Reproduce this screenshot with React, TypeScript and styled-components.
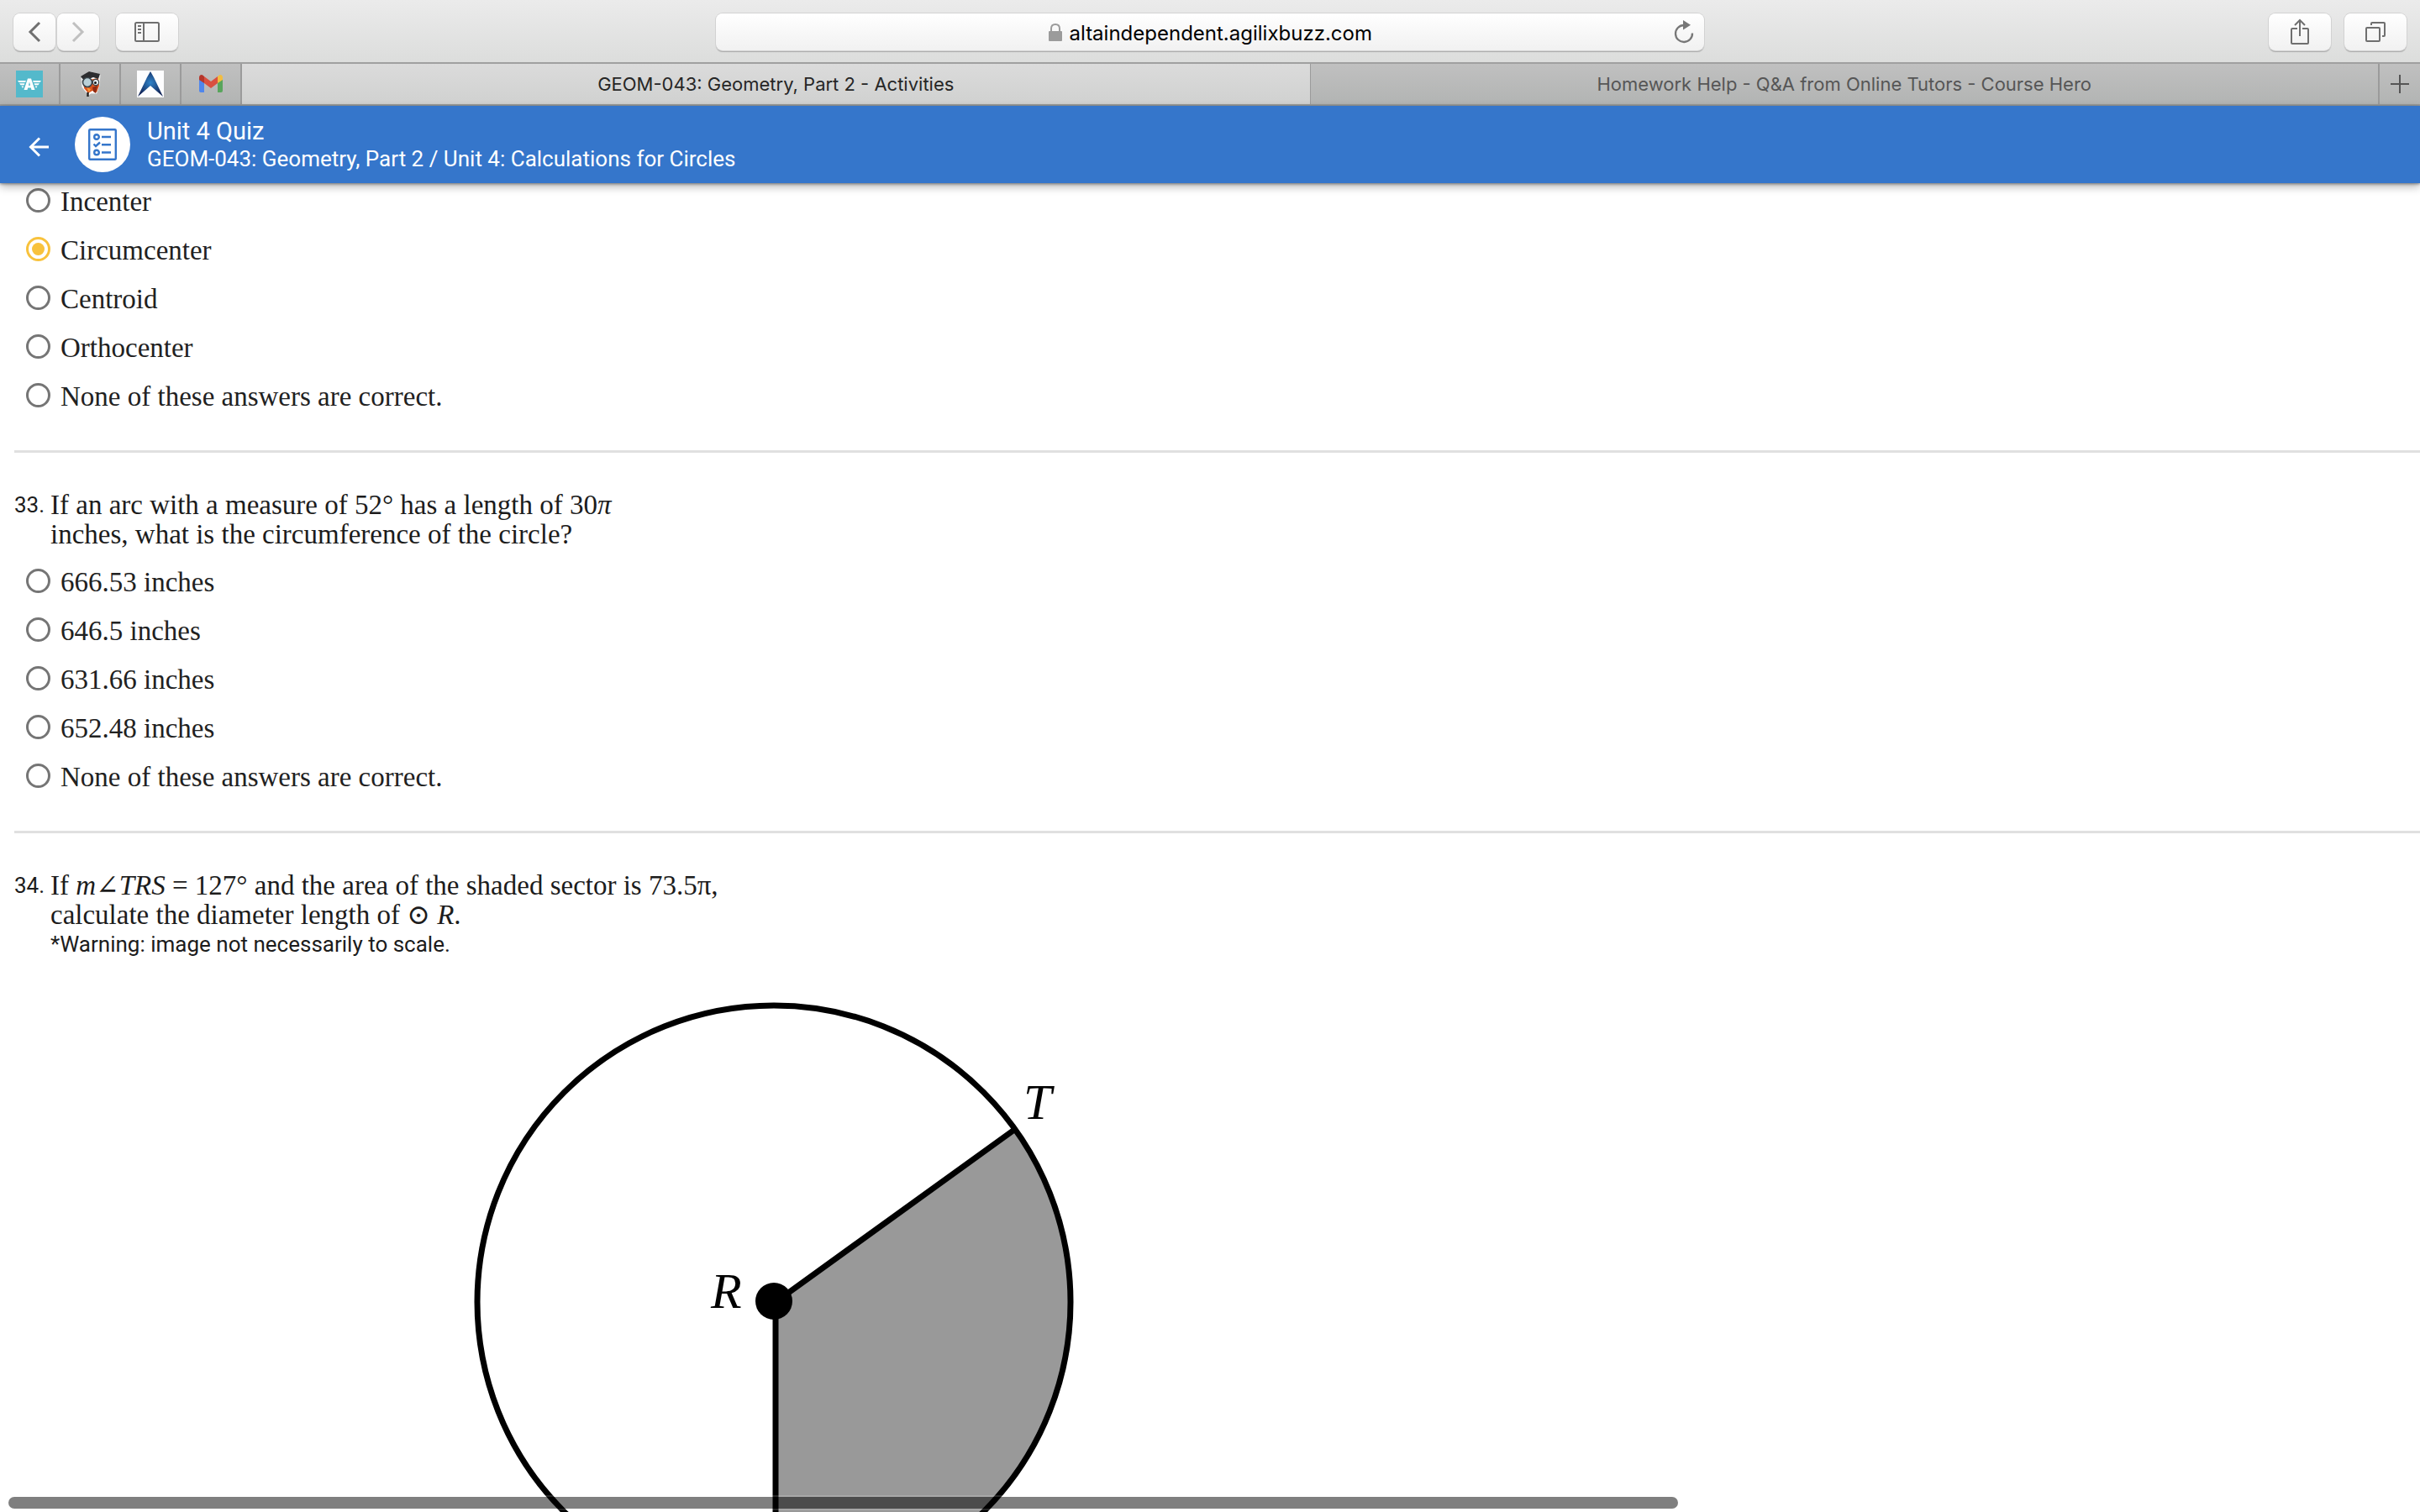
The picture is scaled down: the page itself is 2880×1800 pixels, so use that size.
import React from "react";
import styled, { createGlobalStyle } from "styled-components";

const UI = `Inter, "Liberation Sans", sans-serif`;
const APP = `Roboto, "Liberation Sans", sans-serif`;
const MATH = `"Liberation Serif", "DejaVu Serif", serif`;

const GlobalStyle = createGlobalStyle`
  * { box-sizing: border-box; }
  body { margin: 0; background: #fff; }
  button, input { font: inherit; }
`;

const Window = styled.div`
  position: relative;
  display: flex;
  flex-direction: column;
  height: 100vh;
  overflow: hidden;
  font-family: ${APP};
  color: #212121;
`;

const Toolbar = styled.div`
  display: flex;
  flex: none;
  align-items: center;
  justify-content: space-between;
  height: 74px;
  padding: 2px 16px 0;
  background: linear-gradient(#ebebeb, #dcdddc);
`;

const ToolGroup = styled.div<{ $gap: number }>`
  display: flex;
  flex: 1;
  gap: ${(p) => p.$gap}px;
  &:last-child { justify-content: flex-end; }
`;

const ToolButton = styled.button<{ $wide?: boolean }>`
  display: flex;
  align-items: center;
  justify-content: center;
  width: ${(p) => (p.$wide ? 74 : 50)}px;
  height: 44px;
  padding: 0;
  color: #6f6f6f;
  background: linear-gradient(#fff, #f1f1f1);
  border: 0;
  border-radius: 8px;
  box-shadow: 0 0 0 1px #d2d2d2, 0 2px 1px #a9a9a9;
  &:disabled { color: #c0c0c0; }
`;

const NavPair = styled.div`
  display: flex;
  gap: 2px;
`;

const AddressBar = styled.div`
  display: grid;
  grid-template-columns: 1fr auto 1fr;
  align-items: center;
  width: 41.3%;
  height: 44px;
  padding: 0 12px;
  background: linear-gradient(#fff, #f1f1f1);
  border-radius: 8px;
  box-shadow: 0 0 0 1px #d2d2d2, 0 2px 1px #a9a9a9;
`;

const Address = styled.label`
  grid-column: 2;
  display: flex;
  align-items: center;
  gap: 9px;
`;

const AddressInput = styled.input`
  width: 360px;
  height: 32px;
  padding: 2px 0 0;
  border: 0;
  outline: 0;
  background: transparent;
  color: #000;
  font-family: ${UI};
  font-size: 24px;
`;

const Reload = styled.button`
  justify-self: end;
  display: flex;
  padding: 0;
  border: 0;
  background: none;
  color: #777;
`;

const TabStrip = styled.nav`
  display: flex;
  flex: none;
  height: 52px;
  border-top: 2px solid #a0a0a0;
  border-bottom: 2px solid #9a9c9b;
  background: linear-gradient(#c0c0c0, #b2b4b3);
`;

const PinnedTab = styled.a`
  display: flex;
  align-items: center;
  justify-content: center;
  width: 72px;
  border-right: 2px solid #9b9b9b;
`;

const Tab = styled.a<{ $active?: boolean }>`
  display: flex;
  flex: 1;
  align-items: center;
  justify-content: center;
  color: ${(p) => (p.$active ? "#262626" : "#565656")};
  background: ${(p) => (p.$active ? "linear-gradient(#dbdbdb, #d0d1d0)" : "none")};
  border-right: ${(p) => (p.$active ? 1 : 2)}px solid #9b9b9b;
  font-family: ${UI};
  font-size: 22px;
  text-decoration: none;
`;

const NewTab = styled.button`
  display: flex;
  align-items: center;
  justify-content: center;
  width: 48px;
  padding: 0;
  border: 0;
  background: none;
  color: #555;
`;

const Header = styled.header`
  position: relative;
  z-index: 1;
  display: flex;
  flex: none;
  align-items: center;
  height: 92px;
  padding: 0 32px;
  color: #fff;
  background: #3576cb;
  box-shadow: 0 1px 3px rgba(0, 0, 0, 0.4), 0 4px 10px rgba(0, 0, 0, 0.3);
`;

const BackButton = styled.button`
  display: flex;
  padding: 6px 0 0;
  border: 0;
  background: none;
  color: #fff;
`;

const Badge = styled.div`
  display: flex;
  align-items: center;
  justify-content: center;
  width: 66px;
  height: 66px;
  margin: 0 20px 0 29px;
  border-radius: 50%;
  background: #fff;
  color: #3576cb;
`;

const Title = styled.h1`
  margin: 0;
  font-size: 29px;
  font-weight: 400;
  line-height: 33px;
`;

const Crumb = styled.p`
  margin: 0;
  font-size: 26px;
  line-height: 32px;
`;

const Quiz = styled.main`
  flex: 1;
  min-height: 0;
  overflow: hidden;
  padding: 2px 0 0 17px;
`;

const Question = styled.section`
  padding-bottom: 44px;
  & + & {
    padding-top: 45px;
    border-top: 3px solid #e0e0e0;
  }
`;

const Stem = styled.div`
  display: grid;
  grid-template-columns: 43px 1fr;
  margin-bottom: 19px;
  font-size: 26px;
  line-height: 35px;
  color: #1c1c1c;
`;

const Prose = styled.div`
  font-family: ${MATH};
  font-size: 33px;
`;

const Options = styled.div`
  display: flex;
  flex-direction: column;
  align-items: flex-start;
  gap: 18px;
  padding-left: 14px;
`;

const Option = styled.label`
  display: flex;
  gap: 12px;
  font-family: ${MATH};
  font-size: 33px;
  line-height: 40px;
`;

const Radio = styled.input`
  appearance: none;
  width: 29px;
  height: 29px;
  margin: 4px 0 0;
  padding: 4px;
  border: 3px solid #757575;
  border-radius: 50%;
  &:checked {
    border-color: #f8c23c;
    background: #f8c23c content-box;
  }
`;

const Figure = styled.svg`
  display: block;
  margin: 40px 0 0 545px;
  font-family: ${MATH};
  font-size: 60px;
  font-style: italic;
`;

const ScrollThumb = styled.div`
  position: absolute;
  left: 10px;
  bottom: 4px;
  z-index: 2;
  width: 69%;
  height: 14px;
  border-radius: 7px;
  background: rgba(0, 0, 0, 0.5);
  box-shadow: 0 0 0 2px rgba(255, 255, 255, 0.15);
`;

function Choices({ name, items, selected }: { name: string; items: string[]; selected?: number }) {
  return (
    <Options role="radiogroup" aria-label={name}>
      {items.map((text, i) => (
        <Option key={text}>
          <Radio type="radio" name={name} defaultChecked={i === selected} />
          {text}
        </Option>
      ))}
    </Options>
  );
}

const stroke = { fill: "none", stroke: "currentColor" } as const;

function WingIcon() {
  return (
    <svg width="32" height="32" viewBox="0 0 32 32">
      <rect width="32" height="32" fill="#54b9cb" />
      <path d="M2 12H12L11 14H3.500ZM4 15.200H10.500L9.700 17.200H5.500ZM6.500 18.500H9.200L8 21Z" fill="#fff" />
      <path d="M30 12H20L21 14H28.500ZM28 15.200H21.500L22.300 17.200H26.500ZM25.500 18.500H22.800L24 21Z" fill="#fff" />
      <path fillRule="evenodd" d="M14 9.500H18L22.500 23H18.500L17.800 20.500H14.200L13.500 23H9.500ZM16 13.500L14.900 17.800H17.100Z" fill="#fff" />
    </svg>
  );
}

function OwlIcon() {
  return (
    <svg width="32" height="32" viewBox="0 0 32 32">
      <path d="M6 9L15 1L28 5L27 18L24 27L17 27L13 31L12 26L7 20Z" fill="#fff" stroke="#eee" />
      <path d="M8 12L26 9L27 18L24 26L19 24L14 27L9 21Z" fill="#d9541e" />
      <path d="M19 20L25 18L23 27L20 25Z" fill="#8e2a12" />
      <path d="M12 20L17 22L15 26Z" fill="#f39a3a" />
      <path d="M5 7L15 1L28 4L26 10L20 8L9 12Z" fill="#2d2d2f" />
      <circle cx="13" cy="14" r="5.500" fill="#b9d0d8" stroke="#39444a" strokeWidth="1.600" />
      <circle cx="23" cy="14" r="3.600" fill="#e8f1f3" stroke="#39444a" strokeWidth="1.200" />
      <circle cx="22.500" cy="14.500" r="1.500" fill="#111" />
      <path d="M13.500 26V31" stroke="#222" strokeWidth="2.500" />
    </svg>
  );
}

function PeakIcon() {
  return (
    <svg width="32" height="32" viewBox="0 0 32 32">
      <defs>
        <radialGradient id="peak" cx="0.5" cy="0.45" r="0.55">
          <stop offset="0" stopColor="#2f83c9" />
          <stop offset="1" stopColor="#12265a" />
        </radialGradient>
      </defs>
      <rect width="32" height="32" fill="#fdfdfe" />
      <path d="M16 1L20 8L31 31L24 25L16 18L8 25L1 31L12 8Z" fill="url(#peak)" />
    </svg>
  );
}

function MailIcon() {
  return (
    <svg width="30" height="24" viewBox="0 0 30 24">
      <path d="M1 6L7 10V22H3Q1 22 1 20Z" fill="#4f86ec" />
      <path d="M29 6L23 10V22H27Q29 22 29 20Z" fill="#58a55c" />
      <path d="M7 3L15 9L23 3V11L15 17L7 11Z" fill="#d95040" />
      <path d="M1 4.500Q1 1 4 1Q5 1 7 3V11L1 7Z" fill="#b5362b" />
      <path d="M29 4.500Q29 1 26 1Q25 1 23 3V11L29 7Z" fill="#f2bd42" />
    </svg>
  );
}

export default function App() {
  return (
    <Window>
      <GlobalStyle />
      <Toolbar>
        <ToolGroup $gap={20}>
          <NavPair>
            <ToolButton aria-label="Back">
              <svg width="16" height="26" viewBox="0 0 16 26" {...stroke} strokeWidth="3"><path d="M14 2L3 13L14 24" /></svg>
            </ToolButton>
            <ToolButton aria-label="Forward" disabled>
              <svg width="16" height="26" viewBox="0 0 16 26" {...stroke} strokeWidth="3"><path d="M2 2L13 13L2 24" /></svg>
            </ToolButton>
          </NavPair>
          <ToolButton $wide aria-label="Show sidebar">
            <svg width="30" height="24" viewBox="0 0 30 24" {...stroke} strokeWidth="2">
              <rect x="1" y="1" width="28" height="22" rx="1.500" />
              <path d="M11 1V23M4 5H8M4 9H8M4 13H8" />
            </svg>
          </ToolButton>
        </ToolGroup>
        <AddressBar>
          <Address>
            <svg width="16" height="21" viewBox="0 0 16 21" fill="#9b9b9b">
              <rect y="9" width="16" height="12" rx="1" />
              <path d="M3 10V6Q3 1 8 1Q13 1 13 6V10" fill="none" stroke="#9b9b9b" strokeWidth="2" />
            </svg>
            <AddressInput type="text" aria-label="Address" defaultValue="altaindependent.agilixbuzz.com" />
          </Address>
          <Reload aria-label="Reload">
            <svg width="24" height="28" viewBox="0 0 24 28" {...stroke} strokeWidth="2.300">
              <path d="M12 6A10 10 0 1 0 22 15.500" />
              <path d="M11 0L20 5.800L11 11.500Z" fill="currentColor" stroke="none" />
            </svg>
          </Reload>
        </AddressBar>
        <ToolGroup $gap={16}>
          <ToolButton $wide aria-label="Share">
            <svg width="22" height="32" viewBox="0 0 22 32" {...stroke} strokeWidth="2">
              <path d="M8 12H2Q1 12 1 13V29Q1 30 2 30H20Q21 30 21 29V13Q21 12 20 12H14M11 21V2M5 8L11 2L17 8" />
            </svg>
          </ToolButton>
          <ToolButton $wide aria-label="Show all tabs">
            <svg width="24" height="24" viewBox="0 0 24 24" {...stroke} strokeWidth="2">
              <rect x="1" y="7" width="16" height="16" rx="1" />
              <path d="M7 4V2Q7 1 8 1H22Q23 1 23 2V16Q23 17 22 17H20" />
            </svg>
          </ToolButton>
        </ToolGroup>
      </Toolbar>

      <TabStrip aria-label="Tabs">
        <PinnedTab href="#" aria-label="Pinned tab 1"><WingIcon /></PinnedTab>
        <PinnedTab href="#" aria-label="Pinned tab 2"><OwlIcon /></PinnedTab>
        <PinnedTab href="#" aria-label="Pinned tab 3"><PeakIcon /></PinnedTab>
        <PinnedTab href="#" aria-label="Mail"><MailIcon /></PinnedTab>
        <Tab href="#" $active>GEOM-043: Geometry, Part 2 - Activities</Tab>
        <Tab href="#">Homework Help - Q&amp;A from Online Tutors - Course Hero</Tab>
        <NewTab aria-label="New tab">
          <svg width="22" height="22" viewBox="0 0 22 22" {...stroke} strokeWidth="2"><path d="M11 0V22M0 11H22" /></svg>
        </NewTab>
      </TabStrip>

      <Header>
        <BackButton aria-label="Back to activities">
          <svg width="28" height="24" viewBox="0 0 28 24" {...stroke} strokeWidth="3">
            <path d="M26 12H4M15 1.500L4.500 12L15 22.500" />
          </svg>
        </BackButton>
        <Badge>
          <svg width="34" height="38" viewBox="0 0 34 38" {...stroke} strokeWidth="2.400">
            <rect x="1.200" y="1.200" width="31.600" height="35.600" rx="1" />
            <circle cx="10" cy="10" r="2.800" />
            <circle cx="10" cy="28.500" r="2.800" />
            <path d="M6.500 18.500L9 21L14 16.500M16 10H27M16 19.200H27M16 28.500H27" />
          </svg>
        </Badge>
        <div>
          <Title>Unit 4 Quiz</Title>
          <Crumb>GEOM-043: Geometry, Part 2 / Unit 4: Calculations for Circles</Crumb>
        </div>
      </Header>

      <Quiz>
        <Question>
          <Choices
            name="Question 32"
            selected={1}
            items={["Incenter", "Circumcenter", "Centroid", "Orthocenter", "None of these answers are correct."]}
          />
        </Question>

        <Question>
          <Stem>
            <span>33.</span>
            <Prose>
              If an arc with a measure of 52° has a length of 30<i>π</i>
              <br />
              inches, what is the circumference of the circle?
            </Prose>
          </Stem>
          <Choices
            name="Question 33"
            items={["666.53 inches", "646.5 inches", "631.66 inches", "652.48 inches", "None of these answers are correct."]}
          />
        </Question>

        <Question>
          <Stem>
            <span>34.</span>
            <div>
              <Prose>
                If <i>m</i>∠<i>TRS</i> = 127° and the area of the shaded sector is 73.5π,
                <br />
                calculate the diameter length of ⊙ <i>R</i>.
              </Prose>
              <div>*Warning: image not necessarily to scale.</div>
            </div>
          </Stem>
          <Figure width="730" height="736" viewBox="0 0 730 736" role="img" aria-label="Circle R with a shaded sector">
            <path d="M361 368L645 163A353 353 0 0 1 361 721Z" fill="#999" />
            <circle cx="359" cy="368" r="353" fill="none" stroke="#000" strokeWidth="7" />
            <path d="M645 163L361 368V721" fill="none" stroke="#000" strokeWidth="7" />
            <circle cx="359" cy="367" r="22" />
            <text x="284" y="375">R</text>
            <text x="656" y="150">T</text>
          </Figure>
        </Question>
      </Quiz>
      <ScrollThumb />
    </Window>
  );
}
